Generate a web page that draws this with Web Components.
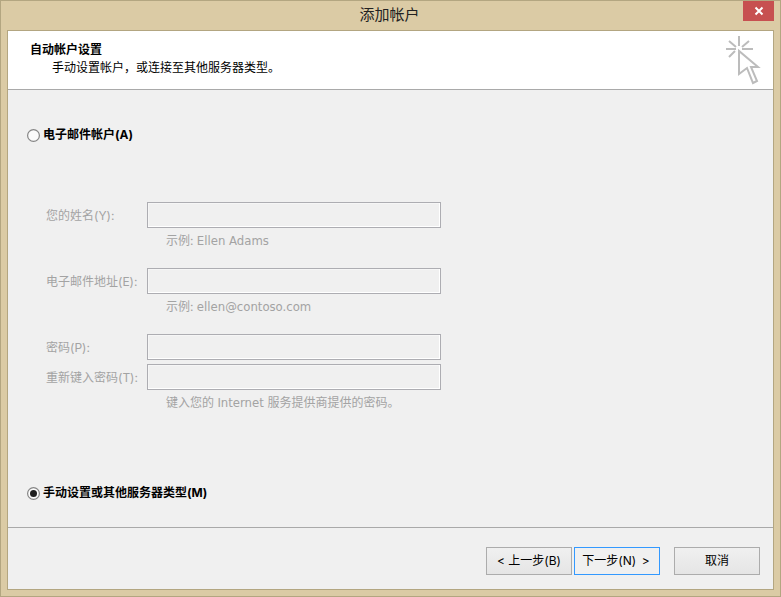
<!DOCTYPE html>
<html lang="zh-CN">
<head>
<meta charset="utf-8">
<title>添加帐户</title>
<style>
html, body { margin: 0; padding: 0; background: #dbcba5; }
body { font: 12px/16px Inter, "Noto Sans CJK SC", sans-serif; color: #000; }
</style>
</head>
<body>
<account-window title="添加帐户">
  <wizard-banner heading="自动帐户设置" sub="手动设置帐户，或连接至其他服务器类型。"></wizard-banner>
  <account-form></account-form>
  <wizard-footer></wizard-footer>
</account-window>

<script>
class AccountWindow extends HTMLElement {
    connectedCallback() {
        const title = this.getAttribute('title') || '';
        this.removeAttribute('title');
        this.attachShadow({ mode: 'open' });
        this.shadowRoot.innerHTML = `
            <style>
                :host {
                    display: flex;
                    flex-direction: column;
                    box-sizing: border-box;
                    width: 781px;
                    height: 597px;
                    background: #dbcba5;
                    border: 1px solid #b3a681;
                }
                .titlebar {
                    position: relative;
                    box-sizing: border-box;
                    height: 29px;
                    flex: none;
                    display: flex;
                    align-items: center;
                    justify-content: center;
                    padding: 0 2px 2px 0;
                    font-size: 15px;
                    color: #222;
                }
                .close {
                    position: absolute;
                    top: 0;
                    right: 6px;
                    width: 31px;
                    height: 20px;
                    background: #c75050;
                    display: flex;
                    align-items: center;
                    justify-content: center;
                }
                .client {
                    flex: none;
                    display: flex;
                    flex-direction: column;
                    box-sizing: border-box;
                    width: 767px;
                    height: 560px;
                    margin-left: 6px;
                    background: #f0f0f0;
                    border: 1px solid #b3a681;
                }
            </style>
            <div class="titlebar">
                <span>${title}</span>
                <div class="close">
                    <svg width="10" height="10" viewBox="0 0 10 10">
                        <path d="M1.5 1.5L8.5 8.5M8.5 1.5L1.5 8.5" stroke="#fff" stroke-width="2" fill="none"/>
                    </svg>
                </div>
            </div>
            <div class="client"><slot></slot></div>
        `;
    }
}

class WizardBanner extends HTMLElement {
    connectedCallback() {
        this.attachShadow({ mode: 'open' });
        this.shadowRoot.innerHTML = `
            <style>
                :host {
                    display: flex;
                    justify-content: space-between;
                    box-sizing: border-box;
                    flex: none;
                    height: 59px;
                    background: #fff;
                    border-bottom: 1px solid #a9a9a9;
                    padding: 11px 12px 0 22px;
                }
                .heading { font-weight: bold; line-height: 16px; }
                .sub { line-height: 16px; margin: 2px 0 0 22px; }
                svg { display: block; margin-top: -10px; }
            </style>
            <div>
                <div class="heading">${this.getAttribute('heading')}</div>
                <div class="sub">${this.getAttribute('sub')}</div>
            </div>
            <svg width="37" height="54" viewBox="0 0 37 54" fill="none" stroke="#bcbcbc" stroke-width="2">
                <path d="M15 4V14M2 17H12M18 17H29M5 9L12 15M25 9L18 15M5 25L11 19"/>
                <path d="M15 19V42L23 36L29 51L33 49L27 35L34 35Z"/>
            </svg>
        `;
    }
}

class RadioOption extends HTMLElement {
    connectedCallback() {
        const checked = this.hasAttribute('checked');
        this.attachShadow({ mode: 'open' });
        this.shadowRoot.innerHTML = `
            <style>
                :host {
                    display: flex;
                    align-items: center;
                    gap: 3px;
                    height: 16px;
                    font-weight: bold;
                }
                svg { display: block; flex: none; }
            </style>
            <svg width="13" height="13" viewBox="0 0 13 13">
                <circle cx="6.5" cy="6.5" r="5.9" fill="#fbfbfb" stroke="#858585" stroke-width="1.2"/>
                ${checked ? '<circle cx="6.5" cy="6.5" r="3.5" fill="#1f1f1f"/>' : ''}
            </svg>
            <span><slot></slot></span>
        `;
    }
}

class TextField extends HTMLElement {
    connectedCallback() {
        this.attachShadow({ mode: 'open' });
        this.shadowRoot.innerHTML = `
            <style>
                :host {
                    display: flex;
                    align-items: center;
                    height: 26px;
                    color: #a3a3a3;
                }
                .label { width: 101px; flex: none; white-space: nowrap; padding-top: 1px; }
                .box {
                    box-sizing: border-box;
                    width: 294px;
                    height: 26px;
                    background: #f0f0f0;
                    border: 1px solid #adadb2;
                    box-shadow: inset -1px -1px 0 #fff, inset 1px 1px 0 #f6f6f6;
                }
            </style>
            <span class="label">${this.getAttribute('label')}</span>
            <div class="box"></div>
        `;
    }
}

class FieldHint extends HTMLElement {
    connectedCallback() {
        this.attachShadow({ mode: 'open' });
        this.shadowRoot.innerHTML = `
            <style>
                :host {
                    display: block;
                    height: 16px;
                    margin: 5px 0 0 120px;
                    color: #a3a3a3;
                    white-space: nowrap;
                }
            </style>
            <slot></slot>
        `;
    }
}

// latin part of a hint, wider face than the rest of the dialog
class HintLatin extends HTMLElement {
    connectedCallback() {
        this.attachShadow({ mode: 'open' });
        this.shadowRoot.innerHTML = `
            <style>
                :host {
                    display: inline;
                    font-family: "DejaVu Sans", sans-serif;
                    font-size: 11.7px;
                }
            </style>
            <slot></slot>
        `;
    }
}

class AccountForm extends HTMLElement {
    connectedCallback() {
        this.attachShadow({ mode: 'open' });
        this.shadowRoot.innerHTML = `
            <style>
                :host {
                    display: flex;
                    flex-direction: column;
                    flex: 1;
                    padding: 37px 0 0 19px;
                }
                .fields { margin: 59px 0 0 19px; }
                .group { margin-bottom: 19px; }
                .pair { margin-bottom: 4px; }
                .manual { margin-top: 74px; }
            </style>
            <radio-option>电子邮件帐户(A)</radio-option>
            <div class="fields">
                <div class="group">
                    <text-field label="您的姓名(Y):"></text-field>
                    <field-hint>示例: <hint-latin>Ellen Adams</hint-latin></field-hint>
                </div>
                <div class="group">
                    <text-field label="电子邮件地址(E):"></text-field>
                    <field-hint>示例: <hint-latin>ellen@contoso.com</hint-latin></field-hint>
                </div>
                <text-field class="pair" label="密码(P):"></text-field>
                <text-field label="重新键入密码(T):"></text-field>
                <field-hint>键入您的 <hint-latin>Internet</hint-latin> 服务提供商提供的密码。</field-hint>
            </div>
            <radio-option class="manual" checked>手动设置或其他服务器类型(M)</radio-option>
        `;
    }
}

class WizardButton extends HTMLElement {
    connectedCallback() {
        this.attachShadow({ mode: 'open' });
        this.shadowRoot.innerHTML = `
            <style>
                :host {
                    display: flex;
                    align-items: center;
                    justify-content: center;
                    box-sizing: border-box;
                    width: 86px;
                    height: 28px;
                    border: 1px solid #acacac;
                    background: linear-gradient(#f0f0f0, #e5e5e5);
                    white-space: nowrap;
                }
                :host([focused]) { border-color: #3399ff; background: #f0f0f0; padding-right: 2px; }
            </style>
            <slot></slot>
        `;
    }
}

class WizardFooter extends HTMLElement {
    connectedCallback() {
        this.attachShadow({ mode: 'open' });
        this.shadowRoot.innerHTML = `
            <style>
                :host {
                    display: flex;
                    flex: none;
                    box-sizing: border-box;
                    height: 62px;
                    border-top: 1px solid #a9a9a9;
                    padding: 19px 0 0 478px;
                }
                .next { margin: 0 14px 0 2px; }
            </style>
            <wizard-button>&lt; 上一步(B)</wizard-button>
            <wizard-button class="next" focused>下一步(N)&#8201; &gt;</wizard-button>
            <wizard-button>取消</wizard-button>
        `;
    }
}

customElements.define('account-window', AccountWindow);
customElements.define('wizard-banner', WizardBanner);
customElements.define('radio-option', RadioOption);
customElements.define('text-field', TextField);
customElements.define('field-hint', FieldHint);
customElements.define('hint-latin', HintLatin);
customElements.define('account-form', AccountForm);
customElements.define('wizard-button', WizardButton);
customElements.define('wizard-footer', WizardFooter);
</script>
</body>
</html>
